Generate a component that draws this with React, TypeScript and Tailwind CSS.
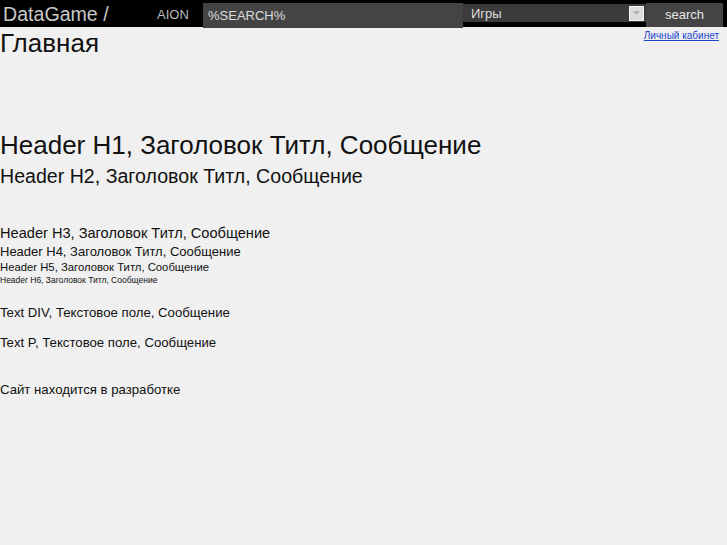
const font = "font-['Liberation_Sans',Arial,sans-serif]"

export default function App() {
  return (
    <div className={`min-h-[545px] bg-[#f0f0f0] text-[#111] ${font}`}>
      <div className="flex h-[27px] items-start bg-black">
        <div className="w-[157px] pl-[3px] pt-[2px] text-[19.6px] leading-[24px] text-[#c8c8c8]">
          DataGame /
        </div>
        <div className="w-[46px] pt-[7px] text-[13px] leading-[16px] text-[#bbbbbb]">AION</div>
        <div className="mt-[3px] flex h-[25px] w-[260px] items-center bg-[#444444] pl-[5px] text-[13px] text-[#dddddd]">
          %SEARCH%
        </div>
        <div className="mt-[4px] flex h-[23px] w-[183px] items-center justify-between border-b-[5px] border-black bg-[#3b3b3b] pl-[8px] pr-[2px] text-[13px] text-[#dddddd]">
          <span className="pt-[1px]">Игры</span>
          <span className="flex h-[15px] w-[15px] items-center justify-center border border-[#f4f4f4] bg-[#dcdcdc]">
            <svg width="7" height="4" viewBox="0 0 7 4">
              <path d="M0 0 L7 0 L3.5 4 Z" fill="#b0b0b0" />
            </svg>
          </span>
        </div>
        <div className="mt-[3px] flex h-[24px] w-[77px] items-center justify-center bg-[#444444] text-[13px] text-[#e8e8e8]">
          search
        </div>
      </div>
      <div className="flex items-start justify-between">
        <h1 className="pt-[1px] text-[26px] leading-[30px]">Главная</h1>
        <a href="#" className="mr-[8px] mt-[3px] text-[10px] leading-[12px] text-[#2244cc] underline">
          Личный кабинет
        </a>
      </div>
      <div className="pt-[72px]">
        <h1 className="text-[26px] leading-[30px]">Header H1, Заголовок Титл, Сообщение</h1>
        <h2 className="mt-[4px] text-[19.6px] leading-[24px]">Header H2, Заголовок Титл, Сообщение</h2>
        <h3 className="mt-[35px] text-[14.6px] leading-[20px]">Header H3, Заголовок Титл, Сообщение</h3>
        <h4 className="text-[13px] leading-[18px]">Header H4, Заголовок Титл, Сообщение</h4>
        <h5 className="text-[11.3px] leading-[12px]">Header H5, Заголовок Титл, Сообщение</h5>
        <h6 className="text-[8.5px] leading-[14px]">Header H6, Заголовок Титл, Сообщение</h6>
        <div className="mt-[18px] text-[13.2px] leading-[16px]">Text DIV, Текстовое поле, Сообщение</div>
        <p className="mt-[14px] text-[13.2px] leading-[16px]">Text P, Текстовое поле, Сообщение</p>
        <p className="mt-[31px] text-[13.2px] leading-[16px]">Сайт находится в разработке</p>
      </div>
    </div>
  )
}
